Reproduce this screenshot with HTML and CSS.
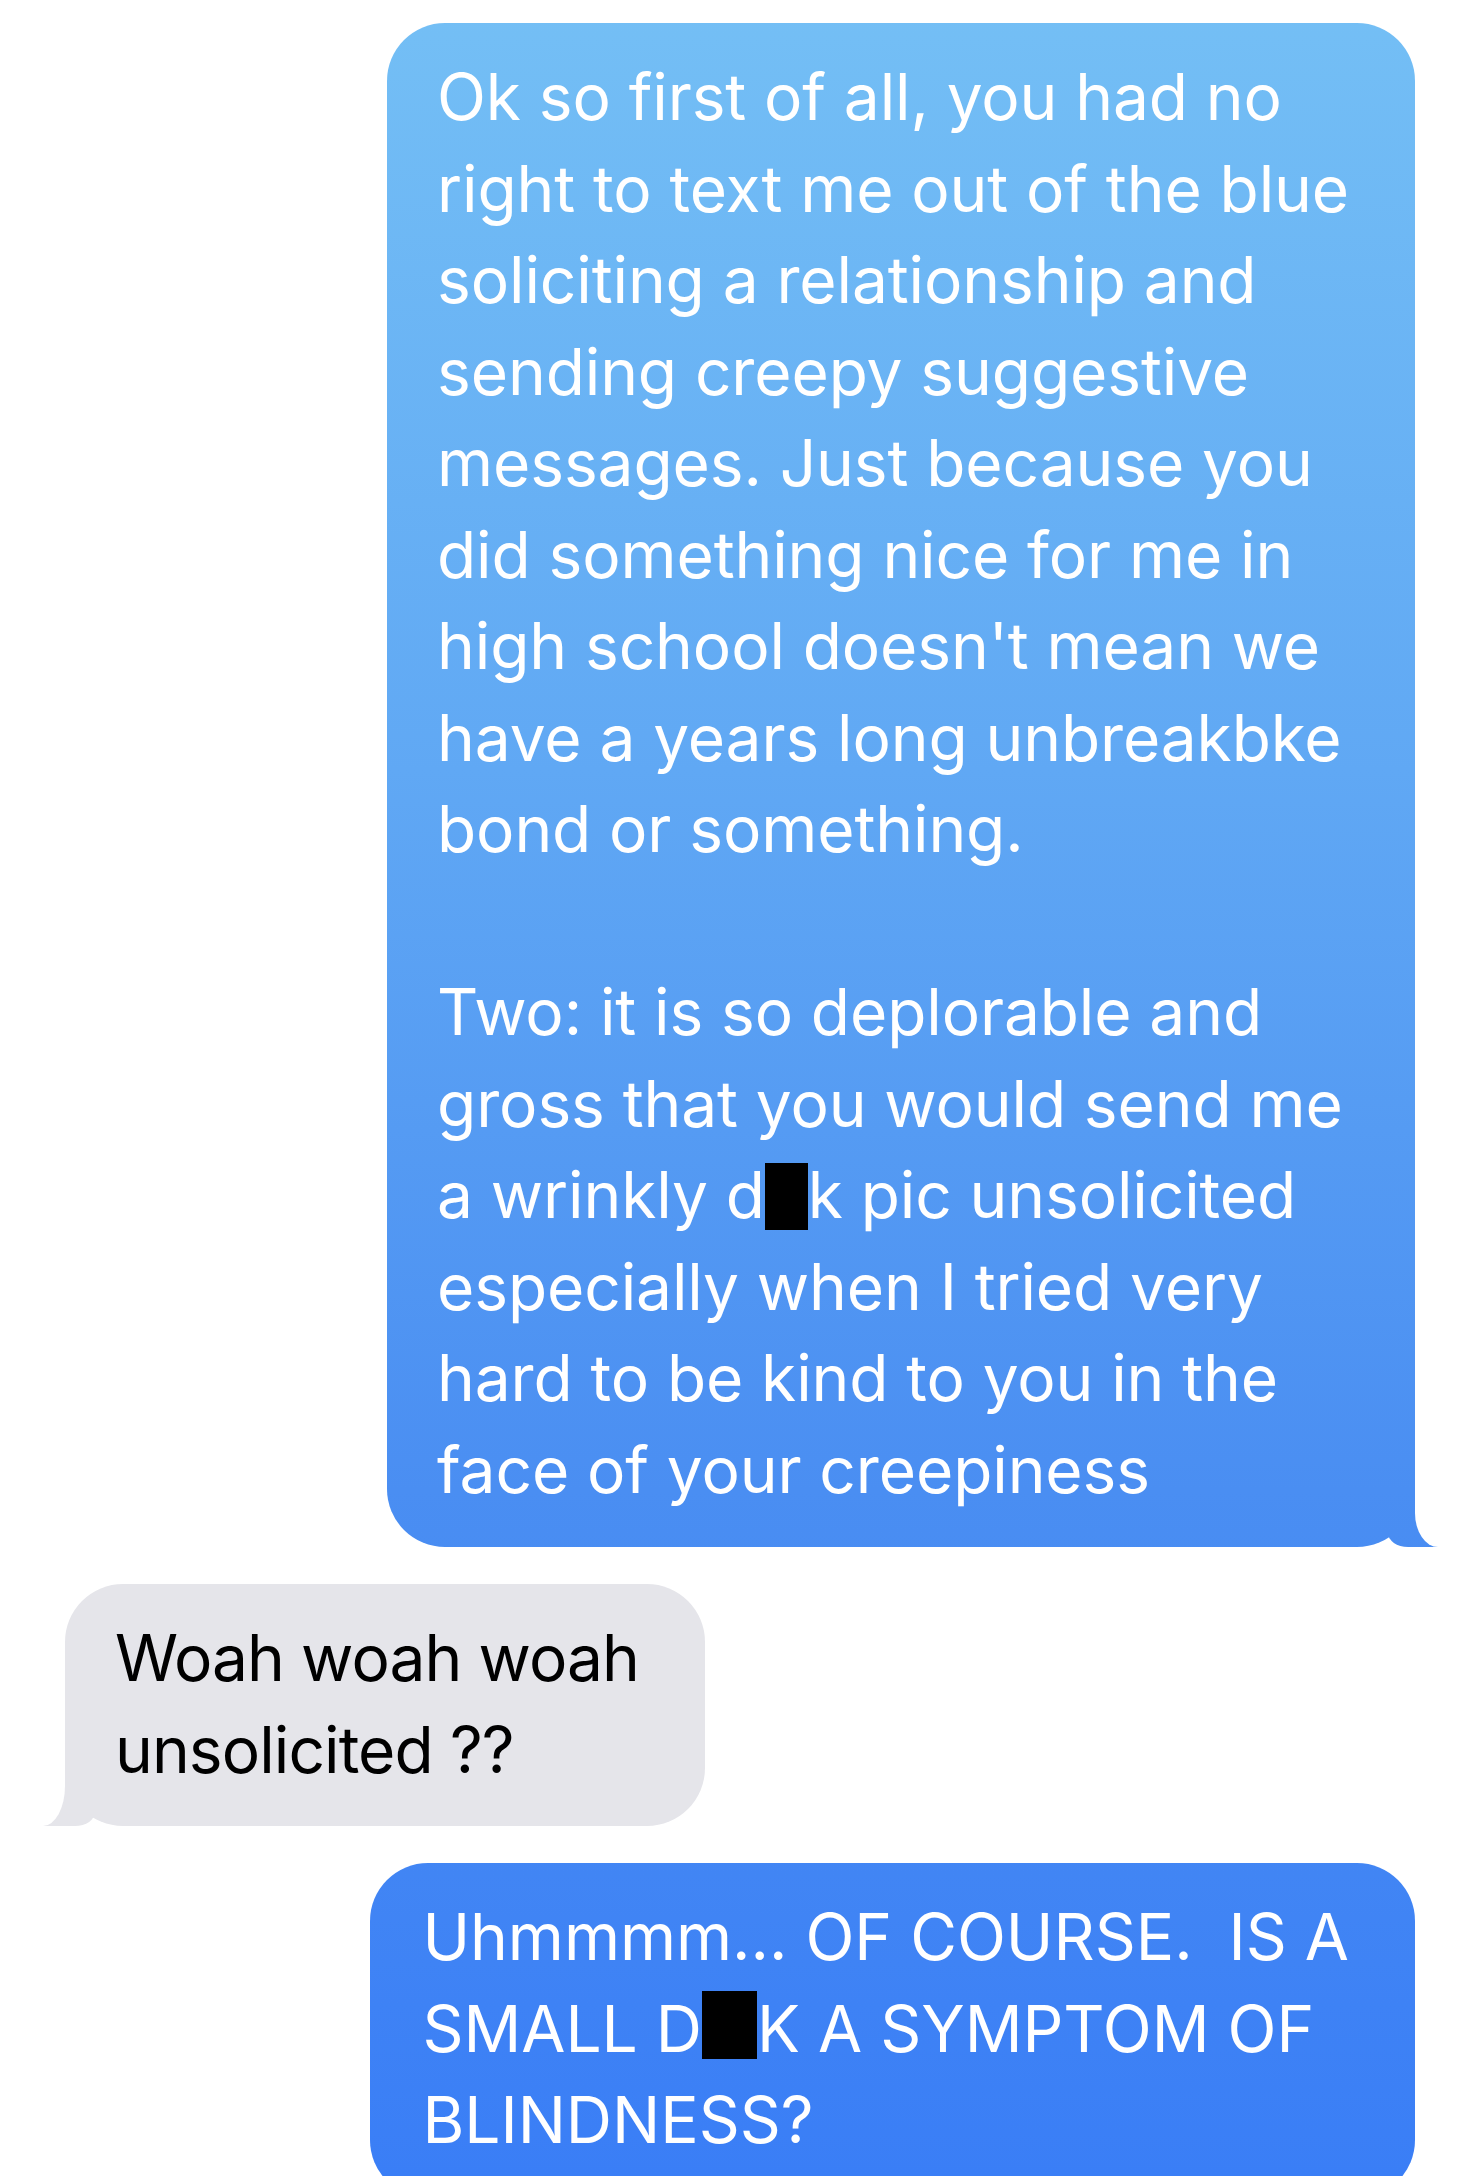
FILE: index.html
```
<!DOCTYPE html>
<html lang="en">
<head>
  <meta charset="UTF-8" />
  <meta name="viewport" content="width=device-width, initial-scale=1.0"/>
  <title>Messages</title>
  <link rel="stylesheet" href="styles.css">
</head>
<body>
  <main class="thread">
    <div class="bubble sent tail">
      Ok so first of all, you had no<br>
      right to text me out of the blue<br>
      soliciting a relationship and<br>
      sending creepy suggestive<br>
      messages. Just because you<br>
      did something nice for me in<br>
      high school doesn't mean we<br>
      have a years long unbreakbke<br>
      bond or something.<br>
      <br>
      Two: it is so deplorable and<br>
      gross that you would send me<br>
      a wrinkly d<span class="redact">ic</span>k pic unsolicited<br>
      especially when I tried very<br>
      hard to be kind to you in the<br>
      face of your creepiness
    </div>

    <div class="bubble received tail">
      Woah woah woah<br>
      unsolicited ??
    </div>

    <div class="bubble sent caps">
      Uhmmmm... OF COURSE.&nbsp; IS A<br>
      SMALL D<span class="redact">IC</span>K A SYMPTOM OF<br>
      BLINDNESS?
    </div>
  </main>
</body>
</html>
```

FILE: styles.css
```
* {
  margin: 0;
  padding: 0;
  box-sizing: border-box;
}

body {
  background: #fff;
  font-family: 'Inter', 'Noto Sans', sans-serif;
}

.thread {
  display: flex;
  flex-direction: column;
  gap: 37px;
  padding-top: 23px;
  height: 100vh;
  overflow: hidden;
}

.bubble {
  position: relative;
  padding: 28px 66px 32px 50px;
  border-radius: 58px;
  font-size: 64px;
  line-height: 91.5px;
  letter-spacing: -0.1px;
  white-space: nowrap;
}

.sent {
  align-self: flex-end;
  margin-right: 65px;
  color: #fff;
  background: linear-gradient(to bottom, #74bff5 0, #60a8f4 770px, #4a8ef2 1490px, #3a7ef6 2176px) fixed;
}

.received {
  align-self: flex-start;
  margin-left: 65px;
  color: #000;
  background: #e5e5ea;
  padding-bottom: 31px;
  letter-spacing: -0.9px;
}

.caps {
  padding-left: 52px;
  letter-spacing: 0;
}

/* tails */
.tail::before,
.tail::after {
  content: "";
  position: absolute;
  bottom: 0;
  height: 60px;
}

.sent.tail::before {
  right: -23px;
  width: 50px;
  background: linear-gradient(to bottom, #74bff5 0, #60a8f4 770px, #4a8ef2 1490px, #3a7ef6 2176px) fixed;
  border-bottom-left-radius: 20px 14px;
}

.sent.tail::after {
  right: -53px;
  width: 53px;
  background: #fff;
  border-bottom-left-radius: 23px 34px;
}

.received.tail::before {
  left: -22px;
  width: 52px;
  background: #e5e5ea;
  border-bottom-right-radius: 20px 14px;
}

.received.tail::after {
  left: -53px;
  width: 53px;
  background: #fff;
  border-bottom-right-radius: 22px 40px;
}

.redact {
  display: inline-block;
  overflow: hidden;
  width: 43px;
  height: 67px;
  vertical-align: -12px;
  line-height: 67px;
  background: #000;
  color: #000;
}

.caps .redact {
  width: 55px;
  height: 68px;
  vertical-align: -7px;
}
```
